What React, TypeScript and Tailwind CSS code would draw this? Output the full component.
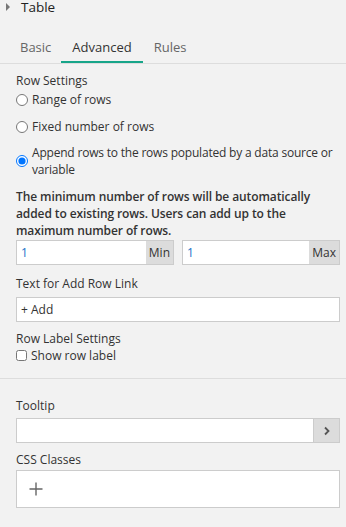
import React from "react";

export default function App() {
  return (
    <div
      className="w-[346px] h-[527px] bg-[#f2f2f2] text-[#333333] overflow-hidden"
      style={{ fontFamily: '"Open Sans", "Liberation Sans", sans-serif' }}
    >
      {/* Header */}
      <div className="flex items-start h-[14px] pl-[6px] gap-[11px]">
        <svg width="4" height="8" viewBox="0 0 4 8" className="mt-[3px]">
          <path d="M0 0 L4 4 L0 8 Z" fill="#777777" />
        </svg>
        <span className="text-[13.5px] leading-[14px] text-[#222222]">Table</span>
      </div>

      {/* Tabs */}
      <div className="mt-[23px] flex border-b border-[#dddddd] pl-[4px]">
        <div className="pl-[16px] pr-[10px] pb-[6px] text-[13px] leading-[20px] text-[#666666]">Basic</div>
        <div className="px-[11px] pb-[4px] text-[13px] leading-[20px] text-[#333333] border-b-[2px] border-[#17a589]">
          Advanced
        </div>
        <div className="px-[11px] pb-[6px] text-[13px] leading-[20px] text-[#666666]">Rules</div>
      </div>

      <div className="pl-[16px] pr-[6px] text-[12px]">
        <div className="mt-[8px] leading-[17px] text-[#333]">Row Settings</div>
        <label className="flex items-center gap-[4px] h-[17px] mt-[2px]">
          <input type="radio" name="rs" className="m-0 w-[12px] h-[12px]" />
          <span>Range of rows</span>
        </label>
        <label className="flex items-center gap-[4px] h-[17px] mt-[10px]">
          <input type="radio" name="rs" className="m-0 w-[12px] h-[12px]" />
          <span>Fixed number of rows</span>
        </label>
        <label className="flex items-center gap-[4px] mt-[9px]">
          <input type="radio" name="rs" defaultChecked className="m-0 w-[12px] h-[12px] shrink-0" />
          <span className="leading-[17px] tracking-[-0.2px]">Append rows to the rows populated by a data source or variable</span>
        </label>

        <div className="mt-[10px] font-semibold leading-[17px] text-[#333] tracking-[-0.1px]">
          The minimum number of rows will be automatically added to existing rows. Users can add up to the maximum number of rows.
        </div>

        <div className="mt-[1px] flex gap-[8px]">
          <div className="flex-1 flex h-[25px] border border-[#cccccc] bg-white">
            <div className="flex-1 pl-[4px] flex items-center text-[#1a73c8]">1</div>
            <div className="bg-[#dcdcdc] px-[3px] flex items-center text-[#333]">Min</div>
          </div>
          <div className="flex-1 flex h-[25px] border border-[#cccccc] bg-white">
            <div className="flex-1 pl-[4px] flex items-center text-[#1a73c8]">1</div>
            <div className="bg-[#dcdcdc] px-[3px] flex items-center text-[#333]">Max</div>
          </div>
        </div>

        <div className="mt-[10px] leading-[17px]">Text for Add Row Link</div>
        <div className="mt-[5px] h-[25px] border border-[#cccccc] bg-white flex items-center pl-[4px]">+ Add</div>

        <div className="mt-[8px] leading-[17px]">Row Label Settings</div>
        <label className="flex items-center gap-[4px] h-[17px]">
          <input type="checkbox" className="m-0 w-[11px] h-[11px]" />
          <span>Show row label</span>
        </label>
      </div>

      <div className="mt-[14px] border-t border-[#dddddd]" />

      <div className="pl-[16px] pr-[6px] text-[12px]">
        <div className="mt-[18px] leading-[17px]">Tooltip</div>
        <div className="mt-[4px] h-[25px] border border-[#cccccc] bg-white flex">
          <div className="flex-1" />
          <div className="w-[26px] bg-[#dcdcdc] border-l border-[#cccccc] flex items-center justify-center">
            <svg width="8" height="10" viewBox="0 0 8 10">
              <path d="M2 1.5 L5.5 5 L2 8.5" stroke="#555" strokeWidth="1.8" fill="none" />
            </svg>
          </div>
        </div>
        <div className="mt-[8px] leading-[17px]">CSS Classes</div>
        <div className="mt-[2px] h-[38px] border border-[#cccccc] bg-white flex items-center pl-[12px]">
          <svg width="14" height="14" viewBox="0 0 14 14">
            <path d="M7 0.5 V13.5 M0.5 7 H13.5" stroke="#666" strokeWidth="1.4" />
          </svg>
        </div>
      </div>
    </div>
  );
}
